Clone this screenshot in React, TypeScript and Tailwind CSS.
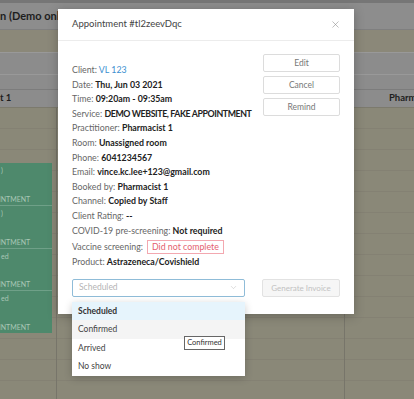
import { ChevronDown, X } from "lucide-react";

const INFO: { label: string; value: string; link?: boolean; tight?: boolean }[] = [
  { label: "Client:", value: "VL 123", link: true },
  { label: "Date:", value: "Thu, Jun 03 2021" },
  { label: "Time:", value: "09:20am - 09:35am" },
  { label: "Service:", value: "DEMO WEBSITE, FAKE APPOINTMENT", tight: true },
  { label: "Practitioner:", value: "Pharmacist 1" },
  { label: "Room:", value: "Unassigned room" },
  { label: "Phone:", value: "6041234567" },
  { label: "Email:", value: "vince.kc.lee+123@gmail.com" },
  { label: "Booked by:", value: "Pharmacist 1" },
  { label: "Channel:", value: "Copied by Staff" },
  { label: "Client Rating:", value: "--" },
  { label: "COVID-19 pre-screening:", value: "Not required" },
];

const STATUSES = ["Scheduled", "Confirmed", "Arrived", "No show"];

const SLOTS = [
  { top: ")", h: "h-[43px]" },
  { top: ")", h: "h-[43px]" },
  { top: "ed", h: "h-[42px]" },
  { top: "ed", h: "h-[42px]" },
];

const App = () => {
  return (
    <div className="relative h-[399px] w-[414px] overflow-hidden bg-[#8a8878] font-['Lato',sans-serif]">
      {/* Page behind the overlay */}
      <div className="h-[3px] bg-[#767676]" />
      <div className="flex h-[26px] items-center whitespace-nowrap bg-[#8d8d8d] text-[11px] font-bold text-[#1e1e1e]">
        n (Demo only)
      </div>
      <div className="h-[23px] border-t border-[#7f7f7f] bg-[#8b8879]" />
      <div className="h-[22px] border-t border-[#999] bg-[#8c8c8c]" />
      <div className="h-[15px] border-t border-[#999] bg-[#8c8c8c]" />
      <div className="flex h-[18px] items-center justify-between border-t border-[#7c7c7c] bg-[#8c8c8c] text-[9.5px] font-bold text-[#1e1e1e]">
        <span>t 1</span>
        <span className="w-[25px] overflow-hidden whitespace-nowrap">Pharmacist 2</span>
      </div>
      <div className="grid h-[292px] grid-cols-[57px_288px_1fr] border-t border-[#7c7a6d] bg-[repeating-linear-gradient(to_bottom,transparent_0,transparent_20px,#848173_20px,#848173_21px)]">
        <div className="border-r border-[#77756a] pt-[55px]">
          <div className="w-[52px] overflow-hidden bg-[#4e896c] text-[7px] leading-[9px] text-[#a9c7b6]">
            {SLOTS.map((s, i) => (
              <div
                key={i}
                className={`${s.h} flex flex-col justify-between pb-[1px] pl-[1px] pt-[3px] ${i < 3 ? "border-b border-[#6fa088]" : ""}`}
              >
                <div>{s.top}</div>
                <div className="-ml-[21px] whitespace-nowrap">APPOINTMENT</div>
              </div>
            ))}
          </div>
        </div>
        <div className="border-r border-[#77756a]" />
        <div />
      </div>

      {/* Modal */}
      <div className="absolute left-[58px] top-[9px] h-[305px] w-[296px] bg-white shadow-[0_2px_10px_rgba(0,0,0,0.25)]">
        <div className="flex h-[32px] items-center justify-between border-b border-[#ececec] pl-[14px] pr-[13px]">
          <span className="text-[9.5px] text-[#444]">Appointment #tl2zeevDqc</span>
          <X size={11} strokeWidth={1.2} className="text-[#888]" />
        </div>

        <div className="flex justify-between pl-[14px] pr-[14px] pt-[13px]">
          <div className="pt-[9px] text-[8.8px] text-[#666]">
            {INFO.map((row) => (
              <div key={row.label} className="h-[14.6px] whitespace-nowrap leading-[14.6px]">
                {row.label}{" "}
                {row.link ? (
                  <span className="text-[#3b8fd0]">{row.value}</span>
                ) : (
                  <span className={`font-bold text-[#222] ${row.tight ? "tracking-[-0.4px]" : ""}`}>{row.value}</span>
                )}
              </div>
            ))}
            <div className="flex h-[17px] items-center whitespace-nowrap">
              Vaccine screening:
              <span className="ml-[4px] flex h-[14px] items-center border border-[#f3a8b0] px-[4px] text-[#e4606e]">
                Did not complete
              </span>
            </div>
            <div className="h-[14.6px] whitespace-nowrap leading-[14.6px]">
              Product: <span className="font-bold text-[#222]">Astrazeneca/Covishield</span>
            </div>
          </div>

          <div className="flex w-[77px] shrink-0 flex-col gap-[4px]">
            {["Edit", "Cancel", "Remind"].map((b) => (
              <button
                key={b}
                className="h-[18px] rounded-[2px] border border-[#dcdcdc] bg-white text-[8.5px] text-[#777]"
              >
                {b}
              </button>
            ))}
          </div>
        </div>

        <div className="mt-[9px] flex justify-between pl-[14px] pr-[14px]">
          <div className="relative w-[173px]">
            <div className="flex h-[18px] items-center justify-between rounded-[2px] border border-[#8fbcd8] pl-[6px] pr-[6px] text-[8.5px] text-[#b5b5b5]">
              <span>Scheduled</span>
              <ChevronDown size={9} strokeWidth={1.3} className="text-[#bbb]" />
            </div>

            {/* Open dropdown */}
            <div className="absolute left-0 top-[23px] z-10 w-[173px] bg-white text-[8.5px] text-[#444] shadow-[0_2px_8px_rgba(0,0,0,0.2)]">
              {STATUSES.map((s, i) => (
                <div
                  key={s}
                  className={
                    i === 0
                      ? "flex h-[18.5px] items-center bg-[#e6f4fc] pl-[6px] font-bold text-[#333]"
                      : i === 1
                        ? "flex h-[18.5px] items-center bg-[#f4f4f4] pl-[6px]"
                        : "flex h-[18.5px] items-center pl-[6px]"
                  }
                >
                  {s}
                </div>
              ))}
            </div>

            {/* Tooltip */}
            <div className="absolute left-[112px] top-[57px] z-20 flex h-[14px] w-[41px] items-center justify-center border border-[#666] bg-white text-[7.5px] text-[#333]">
              Confirmed
            </div>
          </div>

          <button className="h-[18px] w-[78px] shrink-0 whitespace-nowrap rounded-[2px] border border-[#e2e2e2] bg-[#f6f6f6] text-[8px] text-[#c2c2c2]">
            Generate Invoice
          </button>
        </div>
      </div>
    </div>
  );
};

export default App;
